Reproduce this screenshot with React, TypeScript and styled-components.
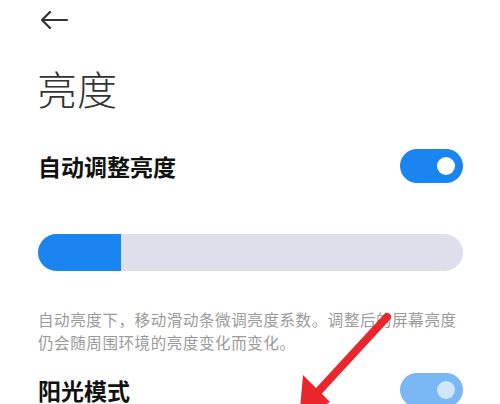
import React, { useState } from "react"
import styled, { createGlobalStyle } from "styled-components"

const GlobalStyle = createGlobalStyle`
	html, body {
		margin: 0;
		padding: 0;
		background: #fff;
	}
	body {
		font-family: "Noto Sans CJK SC", "Noto Sans", sans-serif;
		overflow: hidden;
	}
`

const App: React.FC = () => {
	const [auto, setAuto] = useState(true)
	const [level] = useState(0.195)

	return (
		<Page>
			<GlobalStyle />
			<BackBar>
				<svg width="30" height="18" viewBox="0 0 30 18">
					<path
						d="M28 9H3M11 1L3 9l8 8"
						fill="none"
						stroke="#333"
						strokeWidth="2.2"
						strokeLinecap="round"
						strokeLinejoin="round"
					/>
				</svg>
			</BackBar>
			<Title>亮度</Title>

			<Row>
				<Label>自动调整亮度</Label>
				<Toggle $on={auto} onClick={() => setAuto(!auto)}>
					<Knob $on={auto} />
				</Toggle>
			</Row>

			<Slider>
				<SliderFill style={{ width: `${level * 100}%` }} />
			</Slider>

			<Hint>
				自动亮度下，移动滑动条微调亮度系数。调整后的屏幕亮度仍会随周围环境的亮度变化而变化。
			</Hint>

			<Row className="sun">
				<Label>阳光模式</Label>
				<Toggle $on $disabled>
					<Knob $on $disabled />
				</Toggle>
			</Row>

			<Annotation width="500" height="404" viewBox="0 0 500 404">
				<path d="M387 317L316 394" stroke="#e8262b" strokeWidth="8" strokeLinecap="round" />
				<polygon points="303,375 299,420 330,402" fill="#e8262b" />
			</Annotation>
		</Page>
	)
}

const Page = styled.div`
	position: relative;
	width: 500px;
	height: 404px;
	box-sizing: border-box;
	padding: 0 37px 0 38px;
	overflow: hidden;
`

const BackBar = styled.div`
	display: flex;
	align-items: center;
	height: 24px;
	margin-top: 8px;
	margin-left: 1px;
`

const Title = styled.h1`
	margin: 32px 0 0 -1px;
	font-size: 40px;
	line-height: 48px;
	font-weight: 300;
	color: #333;
`

const Row = styled.div`
	display: flex;
	align-items: center;
	justify-content: space-between;
	height: 34px;
	margin-top: 37px;
	&.sun {
		margin-top: 19px;
	}
`

const Label = styled.span`
	font-size: 23px;
	line-height: 26px;
	font-weight: 700;
	color: #111;
`

const Toggle = styled.div<{ $on?: boolean; $disabled?: boolean }>`
	display: flex;
	align-items: center;
	justify-content: ${(p) => (p.$on ? "flex-end" : "flex-start")};
	box-sizing: border-box;
	width: 63px;
	height: 34px;
	padding: 0 8px;
	border-radius: 17px;
	background: ${(p) => (p.$disabled ? "#7ab7f5" : p.$on ? "#1a84f0" : "#d5d8df")};
	cursor: pointer;
`

const Knob = styled.div<{ $on?: boolean; $disabled?: boolean }>`
	width: 18px;
	height: 18px;
	border-radius: 50%;
	background: ${(p) => (p.$disabled ? "#d3e5f8" : "#fff")};
`

const Slider = styled.div`
	height: 37px;
	margin-top: 51px;
	border-radius: 19px;
	background: #dde0ea;
	overflow: hidden;
`

const SliderFill = styled.div`
	height: 100%;
	background: #1a84f0;
`

const Hint = styled.p`
	margin: 37px 0 0;
	font-size: 15.5px;
	line-height: 23px;
	letter-spacing: 0.6px;
	color: #9a9a9a;
`

const Annotation = styled.svg`
	position: absolute;
	left: 0;
	top: 0;
	pointer-events: none;
`

export default App
